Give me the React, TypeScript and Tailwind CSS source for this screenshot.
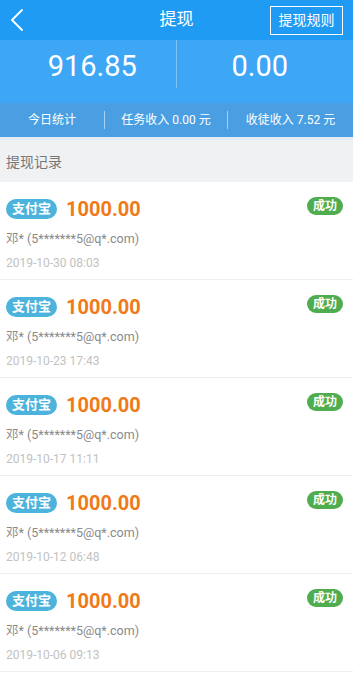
import React from 'react';

const records = [
  '2019-10-30 08:03',
  '2019-10-23 17:43',
  '2019-10-17 11:11',
  '2019-10-12 06:48',
  '2019-10-06 09:13',
];

export default function App() {
  return (
    <div
      className="w-[353px] min-h-[674px] bg-white overflow-hidden"
      style={{ fontFamily: 'Roboto, "Noto Sans CJK SC", sans-serif' }}
    >
      {/* Header */}
      <div className="h-[40px] bg-[#1f9bf3] flex items-center relative">
        <svg className="ml-[10px]" width="14" height="24" viewBox="0 0 14 24" fill="none">
          <path d="M12 2 L2 12 L12 22" stroke="white" strokeWidth="1.8" strokeLinecap="round" strokeLinejoin="round" />
        </svg>
        <div className="absolute left-0 right-0 text-center text-white text-[17px] pointer-events-none">提现</div>
        <div className="ml-auto mr-[10px] h-[29px] w-[73px] border border-white flex items-center justify-center text-white text-[14px]">
          提现规则
        </div>
      </div>

      {/* Balances */}
      <div className="h-[63px] bg-[#3da7f6] flex">
        <div className="flex-1 flex items-center justify-center text-white text-[29px] pb-[12px] pt-[2px] pl-[9px]">916.85</div>
        <div className="w-px bg-[#7cc4f8] mb-[15px]" />
        <div className="flex-1 flex items-center justify-center text-white text-[29px] pb-[12px] pt-[2px] pr-[10px]">0.00</div>
      </div>

      {/* Today stats */}
      <div className="h-[34px] bg-[#4a9fe2] flex items-center text-white text-[12px]">
        <div className="w-[104px] text-center">今日统计</div>
        <div className="w-px h-[18px] bg-[#a8d2f5]" />
        <div className="w-[122px] text-center">任务收入 0.00 元</div>
        <div className="w-px h-[18px] bg-[#a8d2f5]" />
        <div className="flex-1 text-center">收徒收入 7.52 元</div>
      </div>
      <div className="h-[3px] bg-[#e3ecf6]" />

      {/* Section title */}
      <div className="h-[42px] bg-[#f0f1f3] flex items-center pl-[6px] pt-[2px] text-[#777] text-[14px]">提现记录</div>

      {/* Records */}
      {records.map((date) => (
        <div key={date} className="h-[98px] border-b border-[#efefef] px-[6px] pt-[17px] relative">
          <div className="flex items-center">
            <span className="h-[20px] px-[6px] rounded-full bg-[#4cb3dd] text-white text-[13px] font-bold flex items-center">
              支付宝
            </span>
            <span className="ml-[9px] text-[#f07a19] text-[20px] font-bold leading-none">1000.00</span>
            <span className="ml-auto mr-[4px] -mt-[6px] h-[18px] px-[6px] rounded-full bg-[#4fad4f] text-white text-[12px] font-bold flex items-center">
              成功
            </span>
          </div>
          <div className="mt-[12px] text-[#8a8a8a] text-[12.5px] leading-[16px]">邓* (5*******5@q*.com)</div>
          <div className="mt-[9px] text-[#c2c2c2] text-[12px] leading-[15px]">{date}</div>
        </div>
      ))}
    </div>
  );
}
